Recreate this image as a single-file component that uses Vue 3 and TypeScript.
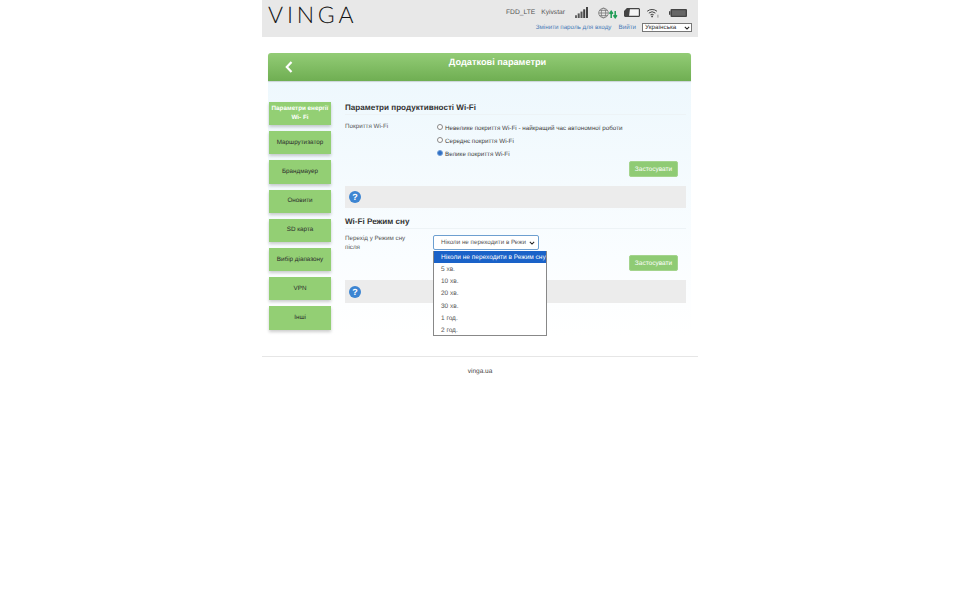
<template>
  <div class="page">
    <header class="top">
      <div class="logo">VINGA</div>
      <div class="top-right">
        <div class="status">
          <span class="net">FDD_LTE</span>
          <span class="net op">Kyivstar</span>
          <svg class="ico signal" width="13" height="11" viewBox="0 0 13 12" preserveAspectRatio="none">
            <rect x="0" y="9" width="2" height="3" fill="#666" />
            <rect x="2.7" y="7" width="2" height="5" fill="#555" />
            <rect x="5.5" y="5" width="2" height="7" fill="#555" />
            <rect x="8.2" y="2.5" width="2" height="9.5" fill="#444" />
            <rect x="11" y="0" width="2" height="12" fill="#444" />
          </svg>
          <svg class="ico globe" width="20" height="12" viewBox="0 0 20 12">
            <g fill="none" stroke="#777" stroke-width="0.8">
              <circle cx="5.5" cy="6" r="4.8" />
              <ellipse cx="5.5" cy="6" rx="2.2" ry="4.8" />
              <path d="M.7 6h9.6M1.4 3.4h8.2M1.4 8.6h8.2" />
            </g>
            <path d="M13.2 11V5M11.5 6.8l1.7-2.4 1.7 2.4M17.2 4v6M15.5 8.2l1.7 2.4 1.7-2.4" fill="none" stroke="#1f9d55" stroke-width="1.5" />
          </svg>
          <svg class="ico sim" width="16" height="9" viewBox="0 0 16 9">
            <path d="M3.2.7h11.6a.6.6 0 0 1 .6.6v6.4a.6.6 0 0 1-.6.6H1.2a.6.6 0 0 1-.6-.6V3.2z" fill="#f4f4f4" stroke="#444" stroke-width="1.2" />
            <path d="M3 .6h3L5 8.4H1V3z" fill="#444" />
          </svg>
          <svg class="ico wifi" width="14" height="10" viewBox="0 0 14 11">
            <g fill="none" stroke="#444" stroke-width="1.1">
              <path d="M.6 3.6a8.4 8.4 0 0 1 10.8 0" />
              <path d="M2.4 5.6a5.6 5.6 0 0 1 7.2 0" />
              <path d="M4.2 7.5a2.9 2.9 0 0 1 3.6 0" />
            </g>
            <circle cx="6" cy="9.3" r="1" fill="#444" />
            <path d="M12.4 7.4v3.2" stroke="#666" stroke-width="0.7" />
          </svg>
          <svg class="ico batt" width="18" height="8" viewBox="0 0 18 9" preserveAspectRatio="none">
            <rect x="1.5" y="0" width="16.5" height="9" rx="1" fill="#444" />
            <rect x="0" y="2.5" width="1.5" height="4" fill="#444" />
            <rect x="3" y="1.4" width="13.6" height="6.2" fill="#666" />
          </svg>
        </div>
        <div class="links">
          <a class="link">Змінити пароль для входу</a>
          <a class="link">Вийти</a>
          <div class="lang">
            <span>Українська</span>
            <svg width="6" height="4" viewBox="0 0 7 5"><path d="M.8 1 3.5 3.8 6.2 1" fill="none" stroke="#222" stroke-width="1.4" /></svg>
          </div>
        </div>
      </div>
    </header>

    <div class="title-bar">
      <svg class="back" width="8" height="12" viewBox="0 0 8 12">
        <path d="M6.5 1 1.8 6l4.7 5" fill="none" stroke="#fff" stroke-width="2.2" />
      </svg>
      <span class="title">Додаткові параметри</span>
    </div>

    <div class="body">
      <nav class="side">
        <button
          v-for="item in menu"
          :key="item"
          class="side-btn"
          :class="{ active: item === menu[0] }"
        >{{ item }}</button>
      </nav>

      <main class="content">
        <section class="sec first">
          <h3 class="sec-title">Параметри продуктивності Wi-Fi</h3>
          <div class="row">
            <div class="label">Покриття Wi-Fi</div>
            <div class="radios">
              <label v-for="(r, i) in coverage" :key="r" class="radio">
                <input type="radio" name="cov" :checked="i === 2" />{{ r }}
              </label>
            </div>
          </div>
          <div class="actions"><button class="apply">Застосувати</button></div>
          <div class="help"><span class="q">?</span></div>
        </section>

        <section class="sec">
          <h3 class="sec-title">Wi-Fi Режим сну</h3>
          <div class="row sleep">
            <div class="label narrow">Перехід у Режим сну після</div>
            <div class="pick">
              <div class="fake-select">
                <span class="val">Ніколи не переходити в Режи</span>
                <svg width="6" height="4" viewBox="0 0 7 5"><path d="M.8 1 3.5 3.8 6.2 1" fill="none" stroke="#222" stroke-width="1.3" /></svg>
              </div>
              <ul class="drop">
                <li v-for="(o, i) in sleepOpts" :key="o" :class="{ sel: i === 0 }">{{ o }}</li>
              </ul>
            </div>
          </div>
          <div class="actions second"><button class="apply">Застосувати</button></div>
          <div class="help tall"><span class="q">?</span></div>
        </section>
      </main>
    </div>

    <footer class="foot">vinga.ua</footer>
  </div>
</template>

<script setup lang="ts">
const menu: string[] = [
  'Параметри енергії Wi- Fi',
  'Маршрутизатор',
  'Брандмауер',
  'Оновити',
  'SD карта',
  'Вибір діапазону',
  'VPN',
  'Інші',
]

const coverage: string[] = [
  'Невелике покриття Wi-Fi - найкращий час автономної роботи',
  'Середнє покриття Wi-Fi',
  'Велике покриття Wi-Fi',
]

const sleepOpts: string[] = [
  'Ніколи не переходити в Режим сну',
  '5 хв.',
  '10 хв.',
  '20 хв.',
  '30 хв.',
  '1 год.',
  '2 год.',
]
</script>

<style>
html, body { background: #fff; }
</style>

<style scoped>
.page {
  width: 436px;
  margin: 0 auto;
  font-family: "Liberation Sans", Arial, sans-serif;
  color: #333;
  font-size: 6.25px;
  text-rendering: geometricPrecision;
}
.top {
  height: 37px;
  background: #e8e8e8;
  display: flex;
  justify-content: space-between;
  padding: 0 6px;
  box-sizing: border-box;
}
.logo {
  font-family: Lato, "Liberation Sans", sans-serif;
  font-weight: 300;
  font-size: 23px;
  line-height: 28px;
  letter-spacing: 3.8px;
  color: #111;
}
.top-right { display: flex; flex-direction: column; align-items: flex-end; }
.status { display: flex; align-items: center; height: 23px; padding-right: 5px; }
.net { font-size: 6.7px; color: #555; margin: 1px 6px 0 0; }
.op { margin-right: 10px; }
.ico { display: block; flex: none; margin-top: 2px; }
.signal { margin-right: 10px; margin-top: 1px; }
.globe { margin-right: 6px; }
.sim { margin-right: 6px; }
.wifi { margin-right: 9px; }
.links { display: flex; align-items: center; gap: 7px; }
.link { color: #4a7db8; }
.lang {
  width: 50px;
  height: 9px;
  box-sizing: border-box;
  padding: 0 1px 0 2px;
  margin-left: -1px;
  background: #fff;
  border: 1px solid #777;
  color: #333;
  display: flex;
  align-items: center;
  justify-content: space-between;
}
.title-bar {
  margin: 16px 7px 0 6px;
  height: 28px;
  border-radius: 3px 3px 0 0;
  background: linear-gradient(#93cc76, #6fae52);
  display: flex;
  align-items: flex-start;
  box-shadow: 0 1px 1px rgba(0, 0, 0, 0.15);
  position: relative;
}
.back { margin: 8px 0 0 17px; }
.title {
  flex: 1;
  text-align: center;
  color: #fff;
  font-weight: bold;
  font-size: 9.2px;
  line-height: 19px;
  padding-left: 11px;
}
.body {
  margin: 0 7px 0 6px;
  display: flex;
  background: linear-gradient(#eef8fd, #fafdff 70%, #fff);
  min-height: 255px;
  padding-top: 21px;
  box-sizing: border-box;
}
.side {
  width: 62px;
  margin-left: 1px;
  flex: none;
  display: flex;
  flex-direction: column;
  gap: 6px;
}
.side-btn {
  height: 23.2px;
  border: 0;
  padding: 0 1px 1px;
  background: #93cf74;
  color: #2c2c2c;
  font: 6.3px/9px "Liberation Sans", Arial, sans-serif;
  text-rendering: geometricPrecision;
  box-shadow: 0 2px 3px rgba(0, 0, 0, 0.2);
}
.side-btn.active { color: #fff; font-weight: bold; }
.content { margin-left: 14px; width: 341px; }
.sec-title {
  margin: 0;
  font-size: 8.1px;
  line-height: 12px;
  color: #333;
  border-bottom: 1px solid #edf3f6;
}
.row { display: flex; margin-top: 6px; }
.label { width: 92px; flex: none; line-height: 9px; margin-top: 1px; color: #555; }
.narrow { width: 72px; margin-right: 16px; }
.radios { display: flex; flex-direction: column; gap: 4px; margin-top: 3px; }
.radio { display: flex; align-items: center; height: 9px; color: #444; }
.radio input {
  appearance: none;
  width: 6px;
  height: 6px;
  margin: 0 2px 4px 0;
  flex: none;
  border: 1px solid #888;
  border-radius: 50%;
  background: #fff;
  box-sizing: border-box;
}
.radio input:checked { background: #2f6fc4; border-color: #6f9fd8; }
.actions { display: flex; justify-content: flex-end; padding-right: 8px; margin-top: 2px; }
.second { margin-top: 3px; }
.apply {
  width: 49px;
  height: 16px;
  border: 1px solid #a4d48d;
  border-radius: 2px;
  background: #8fcb74;
  color: #fff;
  padding: 0;
  font: 6.5px "Liberation Sans", Arial, sans-serif;
  text-rendering: geometricPrecision;
}
.help {
  margin-top: 9px;
  height: 22px;
  background: #ececec;
  display: flex;
  align-items: center;
  padding-left: 4px;
}
.tall { height: 23px; }
.q {
  width: 12px;
  height: 12px;
  border-radius: 50%;
  background: #3d85d2;
  color: #fff;
  font-size: 9px;
  font-weight: bold;
  text-align: center;
  line-height: 12px;
}
.sec + .sec { margin-top: 8px; }
.sleep { margin-top: 6px; }
.sleep .label { margin-top: -1px; }
.pick { position: relative; font-size: 6.5px; }
.fake-select {
  width: 106px;
  height: 15px;
  box-sizing: border-box;
  border: 1px solid #6d9fd0;
  border-radius: 2px;
  background: #fff;
  display: flex;
  align-items: center;
  justify-content: space-between;
  padding: 0 3px 0 7px;
  color: #555;
}
.val { white-space: nowrap; font-size: 6.25px; }
.drop {
  position: absolute;
  left: 0;
  top: 16px;
  width: 114px;
  margin: 0;
  padding: 0;
  list-style: none;
  background: #fff;
  border: 1px solid #888;
  border-top: 0;
  box-sizing: border-box;
  height: 85px;
  overflow: hidden;
  z-index: 5;
}
.drop li { height: 12.14px; line-height: 13.5px; padding-left: 7px; color: #555; white-space: nowrap; }
.drop li.sel { background: #1a62c8; color: #fff; }
.foot {
  margin-top: 20px;
  border-top: 1px solid #e6e6e6;
  text-align: center;
  padding-top: 11px;
  color: #444;
  font-size: 6.5px;
}
</style>
